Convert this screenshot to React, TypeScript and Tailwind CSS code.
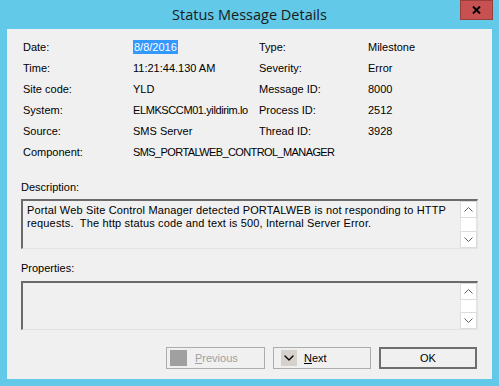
import { ChevronDown } from "lucide-react";

const font = { fontFamily: '"Liberation Sans", Arial, sans-serif' };

const leftRows = [
  { label: "Date:", value: "8/8/2016", selected: true },
  { label: "Time:", value: "11:21:44.130 AM" },
  { label: "Site code:", value: "YLD" },
  { label: "System:", value: "ELMKSCCM01.yildirim.lo", tight: true },
  { label: "Source:", value: "SMS Server" },
];

const rightRows = [
  { label: "Type:", value: "Milestone" },
  { label: "Severity:", value: "Error" },
  { label: "Message ID:", value: "8000" },
  { label: "Process ID:", value: "2512" },
  { label: "Thread ID:", value: "3928" },
];

function ScrollBar() {
  return (
    <div className="flex w-[17px] flex-col bg-[#f0f0f0]">
      <div className="flex h-[17px] items-center justify-center border border-[#dcdcdc] bg-white">
        <svg width="9" height="5" viewBox="0 0 9 5">
          <path d="M0.5 4.5 L4.5 0.5 L8.5 4.5" fill="none" stroke="#606060" strokeWidth="1" />
        </svg>
      </div>
      <div className="flex-1 border-x border-[#e6e6e6] bg-white" />
      <div className="flex h-[17px] items-center justify-center border border-[#dcdcdc] bg-white">
        <svg width="9" height="5" viewBox="0 0 9 5">
          <path d="M0.5 0.5 L4.5 4.5 L8.5 0.5" fill="none" stroke="#606060" strokeWidth="1" />
        </svg>
      </div>
    </div>
  );
}

function TextBox({ height, children }: { height: string; children?: React.ReactNode }) {
  return (
    <div className={`mx-[14px] flex ${height} border-t-2 border-l-2 border-b border-r border-t-[#6b6b6b] border-l-[#6b6b6b] border-b-[#e3e3e3] border-r-[#e3e3e3] bg-[#f0f0f0]`}>
      <div className="flex-1 px-[4px] pt-[3px] text-[11px] leading-[13px] tracking-[0.15px] text-black">{children}</div>
      <ScrollBar />
    </div>
  );
}

export default function App() {
  return (
    <div className="flex h-[386px] w-[499px] flex-col bg-[#62c9e8]" style={font}>
      <div className="relative flex h-[29px] items-center justify-center">
        <span
          className="pt-[1px] text-[14.5px] text-[#1a1a1a]"
          style={{ fontFamily: '"Open Sans", "Noto Sans", sans-serif' }}
        >
          Status Message Details
        </span>
        <div className="absolute right-[6px] top-0 flex h-[20px] w-[33px] items-center justify-center border border-[#9a3d3d] bg-[#c75050]">
          <svg width="9" height="8" viewBox="0 0 9 8">
            <path d="M1 0.5 L8 7.5 M8 0.5 L1 7.5" stroke="#000" strokeWidth="2" />
          </svg>
        </div>
      </div>

      <div className="mx-[7px] flex h-[350px] flex-col bg-[#f0f0f0] text-[11px] text-black">
        <div className="grid grid-cols-[110px_126px_109px_1fr] pl-[16px] pt-[8px]">
          {leftRows.map((row, i) => (
            <div key={row.label} className="contents">
              <div className="h-[21px] leading-[21px]">{row.label}</div>
              <div className={`h-[21px] leading-[21px] ${row.tight ? "tracking-[-0.4px]" : ""}`}>
                {row.selected ? (
                  <span className="bg-[#3399ff] px-[1px] py-[1px] text-white">{row.value}</span>
                ) : (
                  row.value
                )}
              </div>
              <div className="h-[21px] leading-[21px]">{rightRows[i].label}</div>
              <div className="h-[21px] leading-[21px]">{rightRows[i].value}</div>
            </div>
          ))}
          <div className="h-[21px] leading-[21px]">Component:</div>
          <div className="col-span-3 h-[21px] leading-[21px] tracking-[-0.6px]">SMS_PORTALWEB_CONTROL_MANAGER</div>
        </div>

        <div className="mt-[17px] pl-[14px] leading-[14px]">Description:</div>
        <div className="mt-[5px]">
          <TextBox height="h-[50px]">
            Portal Web Site Control Manager detected PORTALWEB is not responding to HTTP
            <br />
            requests.&nbsp; The http status code and text is 500, Internal Server Error.
          </TextBox>
        </div>

        <div className="mt-[12px] pl-[14px] leading-[14px]">Properties:</div>
        <div className="mt-[6px]">
          <TextBox height="h-[49px]" />
        </div>

        <div className="mt-[17px] flex justify-end gap-[8px] pr-[15px]">
          <div className="flex h-[22px] w-[99px] items-center gap-[8px] border border-[#adadad] bg-[#f0f0f0] pl-[3px]">
            <div className="h-[16px] w-[17px] bg-[#a0a0a0]" />
            <span className="text-[#a0a0a0]">
              <span className="underline">P</span>revious
            </span>
          </div>
          <div className="flex h-[22px] w-[98px] items-center gap-[7px] border border-[#adadad] bg-[#f0f0f0] pl-[7px]">
            <div className="flex h-[16px] w-[16px] items-center justify-center bg-[#d6d2cb]">
              <ChevronDown size={16} strokeWidth={2} color="#000" />
            </div>
            <span>
              <span className="underline">N</span>ext
            </span>
          </div>
          <div className="flex h-[22px] w-[98px] items-center justify-center border-2 border-[#6e6e6e] bg-[#f0f0f0]">
            OK
          </div>
        </div>
      </div>
    </div>
  );
}
